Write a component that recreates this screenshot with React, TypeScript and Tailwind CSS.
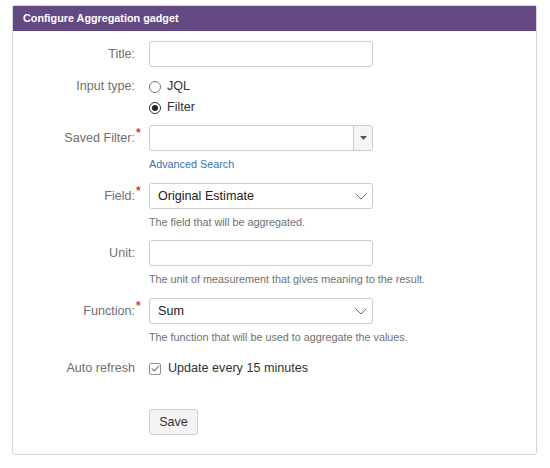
import React from "react";

const Label = ({ text, required, className = "" }: { text: string; required?: boolean; className?: string }) => (
  <div className={`w-[122px] shrink-0 text-right text-[12.6px] text-[#707070] ${className}`}>
    <span className="relative">
      {text}
      {required && (
        <span className="absolute left-full top-[-4px] ml-[1px] text-[12px] font-bold leading-none text-[#d04437]">*</span>
      )}
    </span>
  </div>
);

const Chevron = () => (
  <svg width="12" height="7" viewBox="0 0 12 7" className="shrink-0">
    <polyline points="0.5,0.5 6,6 11.5,0.5" fill="none" stroke="#6b6b6b" strokeWidth="1" />
  </svg>
);

const Desc = ({ children }: { children: React.ReactNode }) => (
  <div className="mt-[6px] text-[10.8px] leading-[14px] text-[#707070]">{children}</div>
);

export default function App() {
  return (
    <div className="min-h-[468px] bg-white pl-[12px] pr-[13px] pt-[5px] font-['Liberation_Sans',Arial,sans-serif]">
      <div className="rounded-[3px] border border-[#d6d6d6]">
        <div className="flex h-[25px] items-center bg-[#654982] pl-[10px] text-[10.8px] font-bold text-white">
          Configure Aggregation gadget
        </div>
        <div className="flex flex-col pb-[19px] pt-[10px]">
          {/* Title */}
          <div className="flex items-center">
            <Label text="Title:" />
            <div className="ml-[14px] h-[26px] w-[224px] rounded-[3px] border border-[#cccccc] bg-white" />
          </div>
          {/* Input type */}
          <div className="mt-[9px] flex">
            <Label text="Input type:" className="leading-[21px]" />
            <div className="ml-[14px] flex flex-col text-[12.6px] text-[#333]">
              <label className="flex h-[21px] items-center gap-[6px]">
                <span className="h-[12px] w-[12px] rounded-full border border-[#767676] bg-white" />
                JQL
              </label>
              <label className="flex h-[21px] items-center gap-[6px]">
                <span className="flex h-[12px] w-[12px] items-center justify-center rounded-full border border-[#333] bg-white">
                  <span className="h-[6px] w-[6px] rounded-full bg-[#222]" />
                </span>
                Filter
              </label>
            </div>
          </div>
          {/* Saved Filter */}
          <div className="mt-[7px] flex">
            <Label text="Saved Filter:" required className="leading-[26px]" />
            <div className="ml-[14px] flex flex-col">
              <div className="flex h-[26px] w-[224px] overflow-hidden rounded-[3px] border border-[#cccccc] bg-white">
                <div className="flex-1" />
                <div className="flex w-[19px] items-center justify-center border-l border-[#cccccc] bg-[#f5f5f5]">
                  <svg width="7" height="4" viewBox="0 0 7 4">
                    <polygon points="0,0 7,0 3.5,4" fill="#555" />
                  </svg>
                </div>
              </div>
              <div className="mt-[6px] text-[10.8px] leading-[14px] text-[#3b73af]">Advanced Search</div>
            </div>
          </div>
          {/* Field */}
          <div className="mt-[12px] flex">
            <Label text="Field:" required className="leading-[26px]" />
            <div className="ml-[14px] flex flex-col">
              <div className="flex h-[26px] w-[224px] items-center justify-between rounded-[3px] border border-[#cccccc] bg-white pl-[8px] pr-[5px] text-[12.6px] text-[#222]">
                <span>Original Estimate</span>
                <Chevron />
              </div>
              <Desc>The field that will be aggregated.</Desc>
            </div>
          </div>
          {/* Unit */}
          <div className="mt-[11px] flex">
            <Label text="Unit:" className="leading-[26px]" />
            <div className="ml-[14px] flex flex-col">
              <div className="h-[26px] w-[224px] rounded-[3px] border border-[#cccccc] bg-white" />
              <Desc>The unit of measurement that gives meaning to the result.</Desc>
            </div>
          </div>
          {/* Function */}
          <div className="mt-[12px] flex">
            <Label text="Function:" required className="leading-[26px]" />
            <div className="ml-[14px] flex flex-col">
              <div className="flex h-[26px] w-[224px] items-center justify-between rounded-[3px] border border-[#cccccc] bg-white pl-[8px] pr-[5px] text-[12.6px] text-[#222]">
                <span>Sum</span>
                <Chevron />
              </div>
              <Desc>The function that will be used to aggregate the values.</Desc>
            </div>
          </div>
          {/* Auto refresh */}
          <div className="mt-[14px] flex">
            <Label text="Auto refresh" className="leading-[21px]" />
            <label className="ml-[14px] flex h-[21px] items-center gap-[7px] text-[12.6px] text-[#333]">
              <span className="flex h-[12px] w-[12px] items-center justify-center rounded-[2px] border border-[#8f8f8f] bg-white">
                <svg width="9" height="7" viewBox="0 0 9 7">
                  <polyline points="0.8,3.6 3.2,6 8.2,0.8" fill="none" stroke="#7a7a7a" strokeWidth="1.1" />
                </svg>
              </span>
              Update every 15 minutes
            </label>
          </div>
          {/* Save */}
          <div className="mt-[30px] flex">
            <div className="w-[122px] shrink-0" />
            <button className="ml-[14px] h-[26px] w-[49px] rounded-[3px] border border-[#cccccc] bg-[#f4f4f4] text-[12.6px] text-[#333]">
              Save
            </button>
          </div>
        </div>
      </div>
    </div>
  );
}
